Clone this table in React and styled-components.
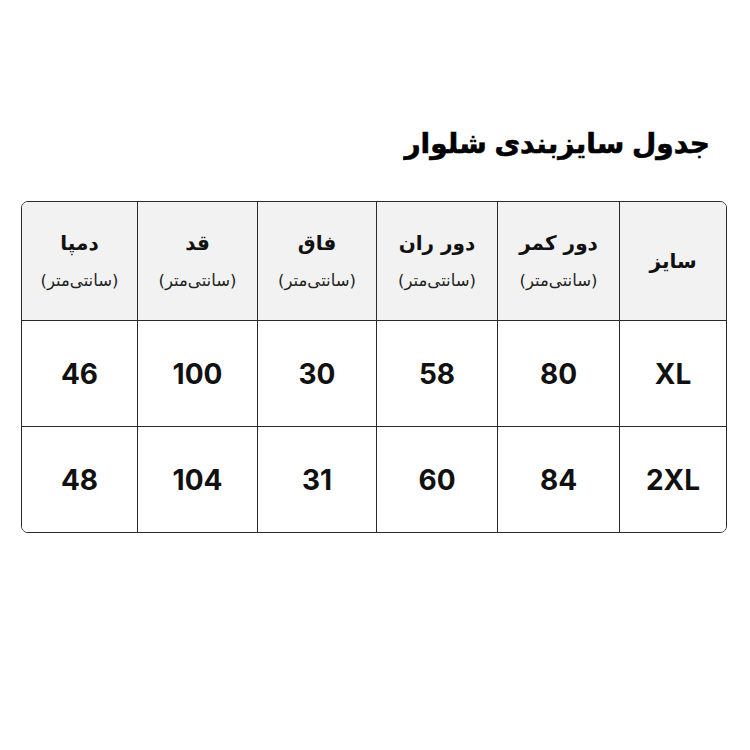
import React from "react";
import styled, { createGlobalStyle } from "styled-components";

const Global = createGlobalStyle`
  html, body { margin: 0; padding: 0; background: #fff; }
  body { font-family: Inter, "DejaVu Sans", sans-serif; color: #111; }
`;

const Page = styled.div`
  width: 750px;
  height: 750px;
  box-sizing: border-box;
  padding: 122px 23px 0 21px;
  direction: rtl;
`;

const Title = styled.h1`
  margin: 0 17px 0 0;
  font-family: "DejaVu Sans", sans-serif;
  font-weight: 700;
  font-size: 28px;
  line-height: 44px;
  height: 44px;
  color: #000;
  word-spacing: -2px;
  -webkit-text-stroke: 0.6px #000;
`;

const Table = styled.div`
  margin-top: 35px;
  display: grid;
  grid-template-columns: 107px 122px 121px 119px 120px 1fr;
  grid-template-rows: 119px 106px 106px;
  border: 1.5px solid #2a2a2a;
  border-radius: 7px;
  overflow: hidden;
  box-sizing: border-box;
  height: 332px;
`;

const Cell = styled.div`
  display: flex;
  flex-direction: column;
  align-items: center;
  justify-content: center;
  background: ${(p) => (p.$head ? "#f2f2f2" : "#fff")};
  border-left: ${(p) => (p.$last ? "none" : "1.3px solid #2a2a2a")};
  border-bottom: ${(p) => (p.$bottom ? "none" : "1.3px solid #2a2a2a")};
`;

const HeadLabel = styled.div`
  font-family: "DejaVu Sans", sans-serif;
  font-weight: 700;
  font-size: 20px;
  line-height: 26px;
  color: #111;
`;

const HeadSub = styled.div`
  margin-top: 14px;
  font-family: "DejaVu Sans", sans-serif;
  font-size: 16.5px;
  line-height: 22px;
  color: #222;
`;

const Value = styled.div`
  font-family: Inter, "DejaVu Sans", sans-serif;
  font-weight: 700;
  font-size: 28px;
  color: #111;
  direction: ltr;
`;

const headers = [
  { label: "سایز" },
  { label: "دور کمر", sub: "(سانتی‌متر)" },
  { label: "دور ران", sub: "(سانتی‌متر)" },
  { label: "فاق", sub: "(سانتی‌متر)" },
  { label: "قد", sub: "(سانتی‌متر)" },
  { label: "دمپا", sub: "(سانتی‌متر)" },
];

const rows = [
  ["XL", "80", "58", "30", "100", "46"],
  ["2XL", "84", "60", "31", "104", "48"],
];

export default function App() {
  return (
    <>
      <Global />
      <Page>
        <Title>جدول سایزبندی شلوار</Title>
        <Table>
          {headers.map((h, i) => (
            <Cell key={"h" + i} $head $last={i === headers.length - 1}>
              <HeadLabel>{h.label}</HeadLabel>
              {h.sub && <HeadSub>{h.sub}</HeadSub>}
            </Cell>
          ))}
          {rows.map((r, ri) =>
            r.map((v, ci) => (
              <Cell
                key={ri + "-" + ci}
                $last={ci === r.length - 1}
                $bottom={ri === rows.length - 1}
              >
                <Value>{v}</Value>
              </Cell>
            ))
          )}
        </Table>
      </Page>
    </>
  );
}
